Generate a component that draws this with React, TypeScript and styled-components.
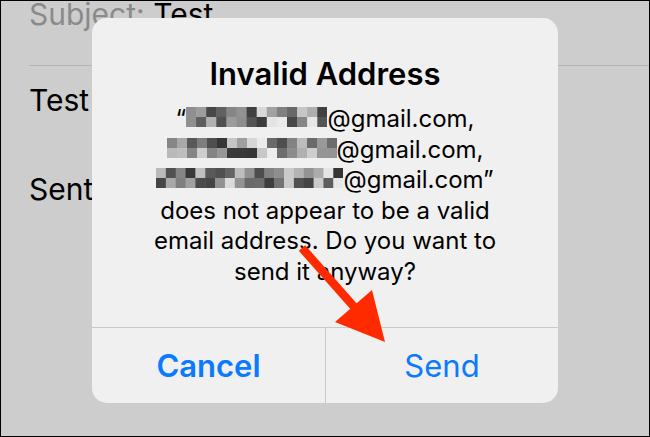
import React from "react";
import styled, { createGlobalStyle } from "styled-components";

const GlobalStyle = createGlobalStyle`
    html, body {
        margin: 0;
        padding: 0;
        background: #cdcdcd;
    }
`;

// pseudo random greys for the redacted parts of the addresses
const makeGreys = (seed: number, count: number) => {
    let s = seed;
    return Array.from({ length: count }, () => {
        s = (s * 9301 + 49297) % 233280;
        return Math.floor(50 + (s / 233280) * 190);
    });
};

type RedactedProps = {
    cols: number;
    cell: number;
    seed: number;
};

const Redacted = ({ cols, cell, seed }: RedactedProps) => {
    const greys = makeGreys(seed, cols * 2);
    const h = 10;
    return (
        <RedactedSvg width={cols * cell} height={h * 2} viewBox={`0 0 ${cols * cell} ${h * 2}`}>
            {greys.map((g, i) => (
                <rect
                    key={i}
                    x={(i % cols) * cell}
                    y={Math.floor(i / cols) * h}
                    width={cell + 0.5}
                    height={h}
                    fill={`rgb(${g},${g},${g})`}
                />
            ))}
        </RedactedSvg>
    );
};

export default function App() {
    return (
        <>
            <GlobalStyle />
            <Frame>
                <MailBody>
                    <MailRow>
                        <Muted>Subject: </Muted>Test
                    </MailRow>
                    <MailRule />
                    <MailRow $gap={16}>Test</MailRow>
                    <MailRow $gap={53}>Sent</MailRow>
                </MailBody>

                <Overlay>
                    <Alert>
                        <AlertContent>
                            <AlertTitle>Invalid Address</AlertTitle>
                            <AlertMessage>
                                <Line>
                                    “<Redacted cols={14} cell={10.1} seed={7} />@gmail.com,
                                </Line>
                                <Line>
                                    <Redacted cols={17} cell={10} seed={31} />@gmail.com,
                                </Line>
                                <Line>
                                    <Redacted cols={19} cell={9.85} seed={113} />@gmail.com”
                                </Line>
                                <Line>does not appear to be a valid</Line>
                                <Line>email address. Do you want to</Line>
                                <Line>send it anyway?</Line>
                            </AlertMessage>
                        </AlertContent>
                        <AlertActions>
                            <ActionButton $bold>Cancel</ActionButton>
                            <ActionButton>Send</ActionButton>
                        </AlertActions>
                    </Alert>
                </Overlay>

                <Arrow width="650" height="437" viewBox="0 0 650 437">
                    <line x1="302" y1="248" x2="356" y2="309" stroke="#ff2a00" strokeWidth="8.5" />
                    <polygon points="385,342 335,322 372,290" fill="#ff2a00" />
                </Arrow>
            </Frame>
        </>
    );
}

const Frame = styled.div`
    position: relative;
    width: 650px;
    height: 437px;
    box-sizing: border-box;
    border: 1px solid #000;
    background: #cdcdcd;
    overflow: hidden;
    font-family: Inter, "Liberation Sans", sans-serif;
    color: #000;
`;

const MailBody = styled.div`
    display: flex;
    flex-direction: column;
    margin-top: -5px;
    padding-left: 28px;
`;

const MailRow = styled.div<{ $gap?: number }>`
    margin-top: ${({ $gap }) => $gap || 0}px;
    font-size: 30px;
    line-height: 36px;
    white-space: nowrap;
`;

const Muted = styled.span`
    color: #8a8a8a;
`;

const MailRule = styled.div`
    margin-top: 33px;
    height: 1px;
    background: #b4b4b4;
`;

const Overlay = styled.div`
    position: absolute;
    inset: 0;
    display: flex;
    justify-content: center;
    align-items: flex-start;
    padding-top: 17px;
`;

const Alert = styled.div`
    width: 466px;
    height: 385px;
    display: flex;
    flex-direction: column;
    background: #f0f0f0;
    border-radius: 15px;
    overflow: hidden;
`;

const AlertContent = styled.div`
    flex: 1;
    display: flex;
    flex-direction: column;
    align-items: center;
    padding-top: 38px;
`;

const AlertTitle = styled.div`
    font-size: 31px;
    line-height: 36px;
    font-weight: 600;
    text-align: center;
`;

const AlertMessage = styled.div`
    margin-top: 12px;
    display: flex;
    flex-direction: column;
    align-items: center;
    font-size: 24px;
    line-height: 30.5px;
`;

const Line = styled.div`
    white-space: nowrap;
`;

const RedactedSvg = styled.svg`
    display: inline-block;
    vertical-align: baseline;
`;

const AlertActions = styled.div`
    height: 75px;
    display: grid;
    grid-template-columns: 1fr 1fr;
    border-top: 1px solid #c9c9c9;
`;

const ActionButton = styled.button<{ $bold?: boolean }>`
    display: flex;
    align-items: center;
    justify-content: center;
    background: none;
    border: none;
    padding: 0;
    font-family: inherit;
    font-size: 31px;
    font-weight: ${({ $bold }) => ($bold ? 600 : 400)};
    color: #0a7aff;
    & + & {
        border-left: 1px solid #c9c9c9;
    }
`;

const Arrow = styled.svg`
    position: absolute;
    left: -1px;
    top: -1px;
    pointer-events: none;
`;
